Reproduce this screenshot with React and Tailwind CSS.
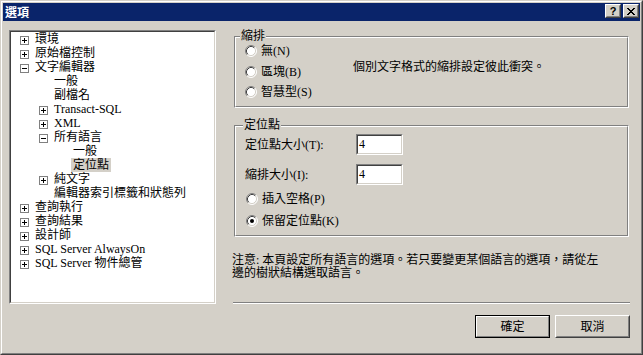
import React from "react";

const tree = [
  { l: 0, t: "環境", e: "+" },
  { l: 0, t: "原始檔控制", e: "+" },
  { l: 0, t: "文字編輯器", e: "-" },
  { l: 1, t: "一般" },
  { l: 1, t: "副檔名" },
  { l: 1, t: "Transact-SQL", e: "+" },
  { l: 1, t: "XML", e: "+" },
  { l: 1, t: "所有語言", e: "-" },
  { l: 2, t: "一般" },
  { l: 2, t: "定位點", sel: true },
  { l: 1, t: "純文字", e: "+" },
  { l: 1, t: "編輯器索引標籤和狀態列" },
  { l: 0, t: "查詢執行", e: "+" },
  { l: 0, t: "查詢結果", e: "+" },
  { l: 0, t: "設計師", e: "+" },
  { l: 0, t: "SQL Server AlwaysOn", e: "+" },
  { l: 0, t: "SQL Server 物件總管", e: "+" },
];

const indent = { 0: "pl-[9px]", 1: "pl-[28px]", 2: "pl-[47px]" };

function Expander({ sign }) {
  return (
    <svg width="9" height="9" viewBox="0 0 9 9" shapeRendering="crispEdges" className="block">
      <rect x="0.5" y="0.5" width="8" height="8" fill="#fff" stroke="#808080" />
      <line x1="2" y1="4.5" x2="7" y2="4.5" stroke="#000" />
      {sign === "+" && <line x1="4.5" y1="2" x2="4.5" y2="7" stroke="#000" />}
    </svg>
  );
}

function Radio({ checked }) {
  return (
    <svg width="12" height="12" viewBox="0 0 12 12" className="block shrink-0">
      <circle cx="6" cy="6" r="5" fill="#fff" />
      <path d="M2.11 9.89 A5.5 5.5 0 0 1 9.89 2.11" fill="none" stroke="#808080" strokeWidth="1" />
      <path d="M9.89 2.11 A5.5 5.5 0 0 1 2.11 9.89" fill="none" stroke="#ffffff" strokeWidth="1" />
      <path d="M2.82 9.18 A4.5 4.5 0 0 1 9.18 2.82" fill="none" stroke="#404040" strokeWidth="1" />
      <path d="M9.18 2.82 A4.5 4.5 0 0 1 2.82 9.18" fill="none" stroke="#d4d0c8" strokeWidth="1" />
      {checked && <circle cx="6" cy="6" r="2" fill="#000" />}
    </svg>
  );
}

function RadioRow({ label, checked, className }) {
  return (
    <div className={"flex items-center " + className}>
      <Radio checked={checked} />
      <span className="ml-[4px] leading-[14px] whitespace-nowrap">{label}</span>
    </div>
  );
}

function TextBox({ value }) {
  return (
    <div className="w-[47px] h-[21px] border border-t-[#808080] border-l-[#808080] border-r-white border-b-white">
      <div className="h-full border border-t-[#404040] border-l-[#404040] border-r-[#d4d0c8] border-b-[#d4d0c8] bg-white pl-[1px] leading-[17px]">
        {value}
      </div>
    </div>
  );
}

function CaptionButton({ children }) {
  return (
    <div className="w-[16px] h-[14px] bg-[#d4d0c8] border border-t-white border-l-white border-r-[#404040] border-b-[#404040]">
      <div className="h-full border border-t-[#d4d0c8] border-l-[#d4d0c8] border-r-[#808080] border-b-[#808080] flex items-center justify-center">
        {children}
      </div>
    </div>
  );
}

function CloseGlyph() {
  const px = [
    [0, 0], [1, 0], [6, 0], [7, 0],
    [1, 1], [2, 1], [5, 1], [6, 1],
    [2, 2], [3, 2], [4, 2], [5, 2],
    [3, 3], [4, 3],
    [2, 4], [3, 4], [4, 4], [5, 4],
    [1, 5], [2, 5], [5, 5], [6, 5],
    [0, 6], [1, 6], [6, 6], [7, 6],
  ];
  return (
    <svg width="8" height="7" viewBox="0 0 8 7" shapeRendering="crispEdges" className="block">
      {px.map(([x, y], i) => (
        <rect key={i} x={x} y={y} width="1" height="1" fill="#000" />
      ))}
    </svg>
  );
}

export default function App() {
  return (
    <div className="w-[643px] h-[355px] bg-[#d4d0c8] border border-t-[#d4d0c8] border-l-[#d4d0c8] border-r-[#404040] border-b-[#404040] text-[12px] text-black font-['Liberation_Serif','Noto_Sans_CJK_TC',serif]">
      <div className="h-full border border-t-white border-l-white border-r-[#808080] border-b-[#808080] p-[1px] flex flex-col">
        {/* Title bar */}
        <div className="h-[18px] bg-[#0a246a] flex items-start justify-between pl-[2px] pr-[1px]">
          <span className="text-white font-bold leading-[18px] font-['Noto_Sans_CJK_TC',sans-serif]">選項</span>
          <div className="flex gap-[2px] pt-[1px]">
            <CaptionButton>
              <span className="text-[11px] font-bold leading-none font-['Liberation_Sans',sans-serif]">?</span>
            </CaptionButton>
            <CaptionButton>
              <CloseGlyph />
            </CaptionButton>
          </div>
        </div>

        {/* Body */}
        <div className="flex pt-[9px]">
          {/* Tree */}
          <div className="ml-[6px] w-[207px] h-[274px] border border-t-[#808080] border-l-[#808080] border-r-white border-b-white">
            <div className="h-full bg-white border border-t-[#404040] border-l-[#404040] border-r-[#d4d0c8] border-b-[#d4d0c8]">
              {tree.map((n, i) => (
                <div key={i} className={"flex items-start h-[14px] " + indent[n.l]}>
                  <div className="w-[9px] h-[9px] mt-[4px] shrink-0">
                    {n.e && <Expander sign={n.e} />}
                  </div>
                  <span
                    className={
                      "ml-[4px] px-[2px] h-[14px] leading-[14px] whitespace-nowrap " +
                      (n.sel ? "bg-[#d4d0c8]" : "")
                    }
                  >
                    {n.t}
                  </span>
                </div>
              ))}
            </div>
          </div>

          {/* Right column */}
          <div className="ml-[16px] w-[398px] mt-[6px] flex flex-col">
            {/* Group 1 */}
            <div className="relative ml-[2px] w-[395px] border border-t-[#808080] border-l-[#808080] border-r-white border-b-white">
              <div className="h-[70px] border border-t-white border-l-white border-r-[#808080] border-b-[#808080] flex pl-[9px]">
                <div className="w-[108px] pt-[3px] flex flex-col">
                  <RadioRow label="無(N)" className="h-[20px]" />
                  <RadioRow label="區塊(B)" className="h-[21px]" />
                  <RadioRow label="智慧型(S)" className="h-[20px]" />
                </div>
                <div className="mt-[22px] leading-[14px] whitespace-nowrap">個別文字格式的縮排設定彼此衝突。</div>
              </div>
              <span className="absolute left-[5px] top-[-8px] bg-[#d4d0c8] px-[1px] leading-[14px]">縮排</span>
            </div>

            {/* Group 2 */}
            <div className="relative ml-[2px] mt-[17px] w-[395px] border border-t-[#808080] border-l-[#808080] border-r-white border-b-white">
              <div className="h-[110px] border border-t-white border-l-white border-r-[#808080] border-b-[#808080] flex flex-col pl-[9px] pt-[7px]">
                <div className="flex items-center h-[21px]">
                  <span className="w-[111px] leading-[14px] whitespace-nowrap">定位點大小(T):</span>
                  <TextBox value="4" />
                </div>
                <div className="flex items-center h-[21px] mt-[9px]">
                  <span className="w-[111px] leading-[14px] whitespace-nowrap">縮排大小(I):</span>
                  <TextBox value="4" />
                </div>
                <RadioRow label="插入空格(P)" className="h-[20px] mt-[4px] pl-[1px]" />
                <RadioRow label="保留定位點(K)" checked className="h-[20px] mt-[2px] pl-[1px]" />
              </div>
              <span className="absolute left-[8px] top-[-8px] bg-[#d4d0c8] px-[1px] leading-[14px]">定位點</span>
            </div>

            {/* Note */}
            <div className="mt-[17px] leading-[13px] whitespace-nowrap">
              注意: 本頁設定所有語言的選項。若只要變更某個語言的選項，請從左
              <br />
              邊的樹狀結構選取語言。
            </div>

            {/* Separator */}
            <div className="mt-[22px] ml-[1px] w-[397px] border-t border-t-[#808080] border-b border-b-white" />

            {/* Buttons */}
            <div className="flex justify-end gap-[5px] mt-[11px]">
              <div className="w-[75px] h-[23px] border border-black">
                <div className="h-full border border-t-white border-l-white border-r-[#808080] border-b-[#808080] flex items-center justify-center leading-[14px]">
                  確定
                </div>
              </div>
              <div className="w-[75px] h-[23px] border border-t-white border-l-white border-r-[#404040] border-b-[#404040]">
                <div className="h-full border border-t-[#d4d0c8] border-l-[#d4d0c8] border-r-[#808080] border-b-[#808080] flex items-center justify-center leading-[14px]">
                  取消
                </div>
              </div>
            </div>
          </div>
        </div>
      </div>
    </div>
  );
}
